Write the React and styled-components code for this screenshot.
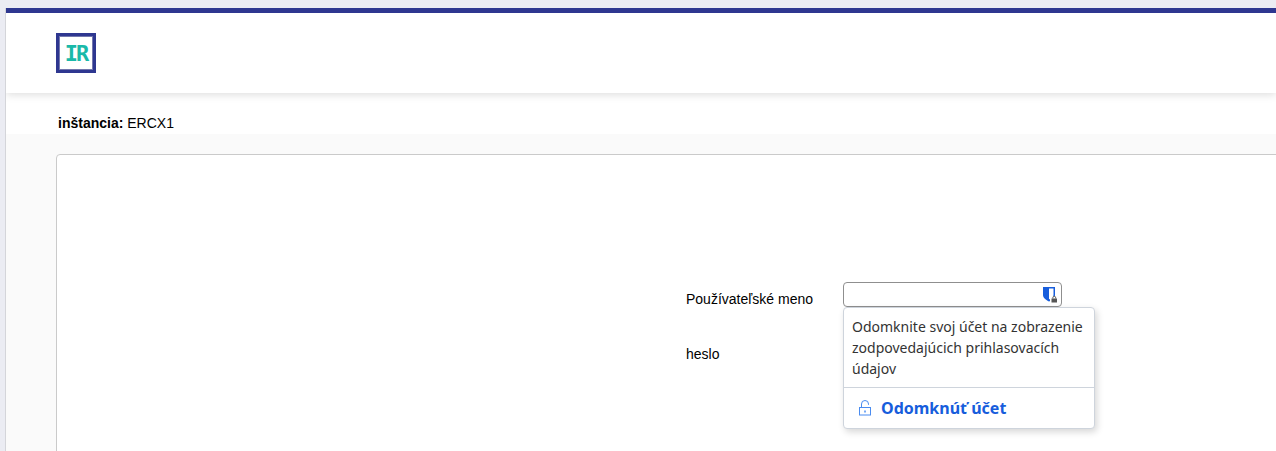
import React from 'react';
import styled, { createGlobalStyle } from 'styled-components';

const GlobalStyle = createGlobalStyle`
  html, body {
    margin: 0;
    height: 100%;
    overflow: hidden;
    background: #ebecf3;
  }
  * {
    box-sizing: border-box;
  }
`;

const Page = styled.div`
  margin: 8px 0 0 5px;
  height: 443px;
  background: #fff;
  border-left: 1px solid #d4d5da;
  font-family: "Liberation Sans", Arial, sans-serif;
  font-size: 14px;
  color: #000;
  overflow: hidden;
`;

const Header = styled.header`
  height: 85px;
  border-top: 5px solid #2e3790;
  padding: 20px 0 0 50px;
  background: #fff;
  box-shadow: 0 2px 8px rgba(0, 0, 0, 0.13);
`;

const Logo = styled.div`
  width: 40px;
  height: 40px;
  border: 3px solid #2e3790;
  outline: 1px solid #7377ad;
  outline-offset: -4px;
  display: flex;
  align-items: center;
  justify-content: center;
  font-family: "DejaVu Sans Mono", monospace;
  font-weight: 700;
  font-size: 22px;
  letter-spacing: -2px;
  color: #1ab9a9;
`;

const Instance = styled.div`
  height: 41px;
  padding: 22px 0 0 52px;
  line-height: 16px;
  white-space: nowrap;

  b {
    font-weight: 700;
  }
`;

const Content = styled.main`
  background: #fafafa;
  padding: 20px 0 0 50px;
  height: 317px;
`;

const Card = styled.section`
  width: 1300px;
  height: 400px;
  background: #fff;
  border: 1px solid #cacaca;
  border-radius: 4px;
  padding: 127px 0 0 629px;
`;

const Row = styled.div`
  display: flex;
  height: 55px;
`;

const Label = styled.label`
  width: 157px;
  padding-top: 9px;
  line-height: 16px;
`;

const FieldWrap = styled.div`
  position: relative;
  width: 219px;
  height: 25px;
`;

const Input = styled.div`
  height: 25px;
  border: 1px solid #8f8f8f;
  border-radius: 4px;
  background: #fff;
  display: flex;
  justify-content: flex-end;
  align-items: center;
  padding-right: 3px;
`;

const Popup = styled.div`
  position: absolute;
  top: 25px;
  left: 0;
  width: 252px;
  background: #fff;
  border: 1px solid #ced4dc;
  border-radius: 4px;
  box-shadow: 2px 3px 7px rgba(0, 0, 0, 0.16);
  font-family: "Noto Sans", "Open Sans", sans-serif;
`;

const PopupText = styled.p`
  margin: 0;
  padding: 8px 8px 8px;
  font-size: 14px;
  line-height: 21px;
  color: #333;
  border-bottom: 1px solid #ced4dc;
`;

const UnlockButton = styled.button`
  display: flex;
  align-items: center;
  gap: 8px;
  width: 100%;
  height: 40px;
  padding: 0 0 0 14px;
  border: 0;
  background: transparent;
  font-family: inherit;
  font-size: 16px;
  font-weight: 700;
  color: #175ddc;
`;

function ShieldIcon() {
  return (
    <svg width="16" height="17" viewBox="0 0 16 17">
      <path d="M1 1h12v8c0 3-3 5-6 6.500C4 14 1 12 1 9z" fill="#175ddc" />
      <path d="M7 2.500h4.500v6.500c0 1.800-2.500 3.300-4.500 4.400z" fill="#fff" />
      <rect x="8" y="10" width="8" height="7" fill="#fff" />
      <rect x="9.500" y="12.500" width="5.500" height="4" fill="#555" />
      <path d="M10.800 12.500v-.7a1.400 1.400 0 0 1 2.900 0v.7" fill="none" stroke="#555" />
    </svg>
  );
}

function LockIcon() {
  return (
    <svg width="15" height="16" viewBox="0 0 15 16" fill="none" stroke="#4a8cf0" strokeWidth="1">
      <rect x="1.500" y="7.500" width="11" height="7.500" />
      <path d="M3.500 7.500V4a3.500 3.500 0 0 1 7 0v.8" />
      <path d="M7 10.500v2" strokeWidth="1.500" />
    </svg>
  );
}

export default function App() {
  return (
    <>
      <GlobalStyle />
      <Page>
        <Header>
          <Logo>IR</Logo>
        </Header>
        <Instance>
          <b>inštancia:</b> ERCX1
        </Instance>
        <Content>
          <Card>
            <Row>
              <Label>Používateľské meno</Label>
              <FieldWrap>
                <Input>
                  <ShieldIcon />
                </Input>
                <Popup>
                  <PopupText>
                    Odomknite svoj účet na zobrazenie zodpovedajúcich prihlasovacích údajov
                  </PopupText>
                  <UnlockButton>
                    <LockIcon />
                    Odomknúť účet
                  </UnlockButton>
                </Popup>
              </FieldWrap>
            </Row>
            <Row>
              <Label>heslo</Label>
            </Row>
          </Card>
        </Content>
      </Page>
    </>
  );
}
